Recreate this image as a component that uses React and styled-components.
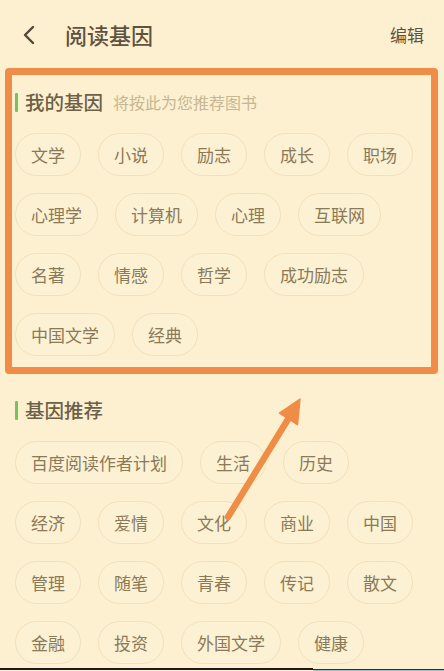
import React from "react";
import styled, { createGlobalStyle } from "styled-components";

const GlobalStyle = createGlobalStyle`
  html, body { margin: 0; padding: 0; background: #fdf0d0; }
  body { overflow: hidden; font-family: "Noto Sans CJK SC", "Noto Sans", sans-serif; }
`;

const Page = styled.div`
  position: relative;
  width: 444px;
  height: 671px;
  background: #fdf0d0;
  display: flex;
  flex-direction: column;
  overflow: hidden;
`;

const Header = styled.header`
  height: 68px;
  display: flex;
  align-items: center;
  padding: 0 20px 0 20px;
  box-sizing: border-box;
`;

const BackButton = styled.button`
  width: 18px;
  height: 24px;
  border: 0;
  padding: 0;
  background: none;
  display: flex;
  align-items: center;
  justify-content: center;
  margin-right: 27px;
  margin-top: 2px;
`;

const Title = styled.h1`
  margin: 0;
  font-size: 22px;
  font-weight: 500;
  color: #5d5340;
  line-height: 1;
  flex: 1;
`;

const EditLink = styled.span`
  font-size: 17px;
  color: #5d5340;
  line-height: 1;
  margin-right: 0px;
`;

const Highlight = styled.section`
  margin: 0 6px 0 5px;
  border: 7px solid #ef8d48;
  border-radius: 4px;
  padding: 14px 4px 11px 3px;
`;

const Section = styled.section`
  padding: ${(p) => p.$pad || "0"};
`;

const SectionHead = styled.div`
  display: flex;
  align-items: center;
  height: 26px;
  margin-bottom: 18px;
`;

const Bar = styled.span`
  width: 3px;
  height: 19px;
  background: #77c25a;
  border-radius: 1px;
  margin-right: 7px;
`;

const SectionTitle = styled.h2`
  margin: 0;
  font-size: 19.5px;
  font-weight: 500;
  color: #6c6047;
  line-height: 1;
`;

const SectionNote = styled.span`
  margin-left: 10px;
  font-size: 16px;
  color: #c6b692;
  line-height: 1;
`;

const ChipList = styled.div`
  display: flex;
  flex-wrap: wrap;
  gap: 17px;
`;

const Chip = styled.span`
  box-sizing: border-box;
  height: 43px;
  padding: 0 15px;
  border: 1px solid #f1e0bb;
  border-radius: 22px;
  display: inline-flex;
  align-items: center;
  font-size: 17px;
  color: #8a7a58;
  background: #fdf1d4;
  white-space: nowrap;
`;

const BottomStrip = styled.div`
  margin-top: auto;
  height: 3px;
  display: flex;
`;

const StripDark = styled.span`
  width: 313px;
  border-top: 2px solid #1a1a1a;
`;

const StripBlue = styled.span`
  flex: 1;
  border-top: 1px solid #2a2f33;
  background: #9ec1d6;
  margin-top: 1px;
`;

const Annotation = styled.svg`
  position: absolute;
  left: 0;
  top: 0;
  pointer-events: none;
`;

const myGenes = [
  "文学", "小说", "励志", "成长", "职场",
  "心理学", "计算机", "心理", "互联网",
  "名著", "情感", "哲学", "成功励志",
  "中国文学", "经典",
];

const recommended = [
  "百度阅读作者计划", "生活", "历史",
  "经济", "爱情", "文化", "商业", "中国",
  "管理", "随笔", "青春", "传记", "散文",
  "金融", "投资", "外国文学", "健康",
];

export default function App() {
  return (
    <>
      <GlobalStyle />
      <Page>
        <Header>
          <BackButton aria-label="返回">
            <svg width="14" height="20" viewBox="0 0 14 20">
              <path d="M11 2 L3 10 L11 18" fill="none" stroke="#4f4737" strokeWidth="2.4" strokeLinecap="round" strokeLinejoin="round" />
            </svg>
          </BackButton>
          <Title>阅读基因</Title>
          <EditLink>编辑</EditLink>
        </Header>

        <Highlight>
          <SectionHead>
            <Bar />
            <SectionTitle>我的基因</SectionTitle>
            <SectionNote>将按此为您推荐图书</SectionNote>
          </SectionHead>
          <ChipList>
            {myGenes.map((g) => (
              <Chip key={g}>{g}</Chip>
            ))}
          </ChipList>
        </Highlight>

        <Section $pad="23px 14px 0 15px">
          <SectionHead>
            <Bar />
            <SectionTitle>基因推荐</SectionTitle>
          </SectionHead>
          <ChipList>
            {recommended.map((g) => (
              <Chip key={g}>{g}</Chip>
            ))}
          </ChipList>
        </Section>

        <BottomStrip>
          <StripDark />
          <StripBlue />
        </BottomStrip>

        <Annotation width="444" height="671" viewBox="0 0 444 671">
          <line x1="228" y1="517" x2="290" y2="416" stroke="#ef8c45" strokeWidth="6.5" strokeLinecap="round" />
          <polygon points="300,399 279.5,413 297.5,424.5" fill="#ef8c45" stroke="#ef8c45" strokeWidth="1.5" strokeLinejoin="round" />
        </Annotation>
      </Page>
    </>
  );
}
